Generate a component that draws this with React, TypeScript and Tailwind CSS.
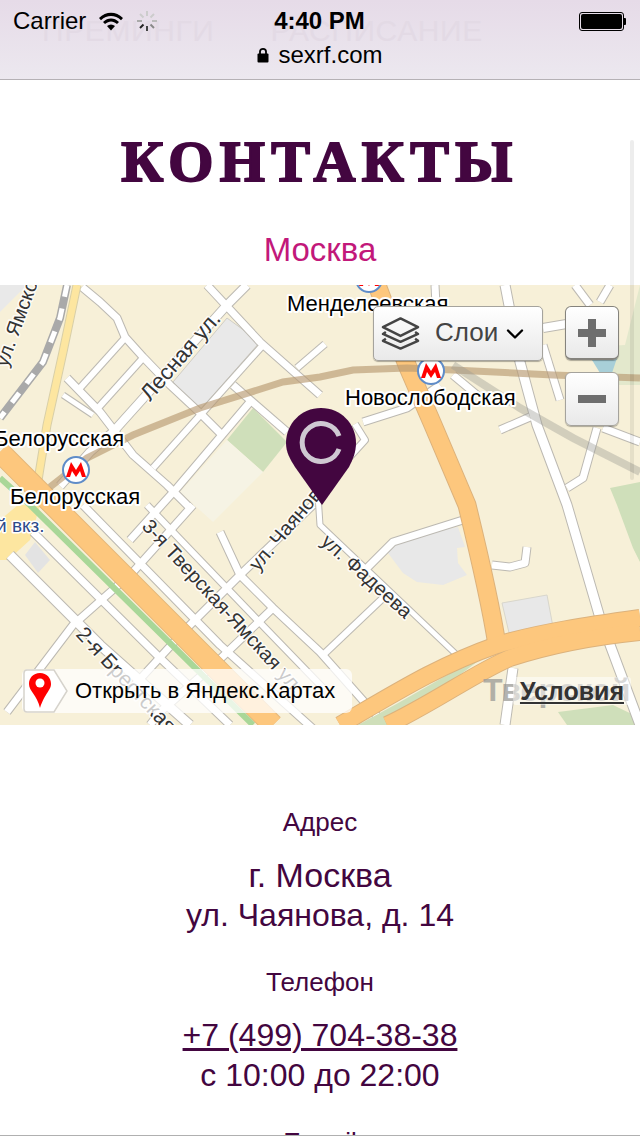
import React from 'react';
import { ChevronDown } from 'lucide-react';

type Road = { d: string; w: number };

// thin city streets, page coordinates (the svg viewBox starts at y=285)
const STREETS: Road[] = [
  { d: 'M82 287L100 302L117 318L125 337L143 357L170 385L200 413L222 435', w: 7 },
  { d: 'M247 285L227 305L113 432L90 452L60 486', w: 8 },
  { d: 'M80 388L125 338', w: 6 },
  { d: 'M98 408L143 358', w: 6 },
  { d: 'M67 378L100 412L133 455L167 485L190 508', w: 7 },
  { d: 'M63 395L93 415', w: 5 },
  { d: 'M207 285L260 342L320 395', w: 7 },
  { d: 'M233 385L287 432', w: 7 },
  { d: 'M263 345L153 468', w: 6 },
  { d: 'M250 402L177 488L130 540', w: 7 },
  { d: 'M297 368L325 344', w: 6 },
  { d: 'M0 460L30 490', w: 5 },
  { d: 'M10 555L100 645L190 725', w: 9 },
  { d: 'M33 532L157 655L230 725', w: 7 },
  { d: 'M83 505L220 645L320 735', w: 7 },
  { d: 'M147 505L267 630L325 690', w: 6 },
  { d: 'M220 532L240 575L273 608L320 652L367 705L385 725', w: 7 },
  { d: 'M193 505L133 572L73 625L7 712', w: 7 },
  { d: 'M240 575L187 628L130 690', w: 7 },
  { d: 'M273 608L217 662L160 712L150 725', w: 7 },
  { d: 'M313 505L240 575', w: 7 },
  { d: 'M318 495L320 525L460 658', w: 5 },
  { d: 'M323 655L383 598', w: 6 },
  { d: 'M367 568L393 542L463 520', w: 7 },
  { d: 'M492 565L510 567L525 563L527 547', w: 7 },
  { d: 'M363 422L407 408L440 385', w: 7 },
  { d: 'M355 424L365 440L345 462', w: 6 },
  { d: 'M453 375L477 395', w: 7 },
  { d: 'M500 430L530 417', w: 7 },
  { d: 'M543 328L590 320', w: 8 },
  { d: 'M543 345L560 400', w: 7 },
  { d: 'M505 285L520 362L537 425L567 505L600 618L640 725', w: 9 },
  { d: 'M597 428L583 478L567 488', w: 7 },
  { d: 'M603 428L640 442', w: 7 },
  { d: 'M435 285L436 305', w: 7 },
  { d: 'M575 285L590 305', w: 7 },
  { d: 'M610 285L600 302', w: 7 },
  { d: 'M505 725L513 668', w: 9 },
];

const STREET_LABELS = [
  { text: 'Лесная ул.', x: 150, y: 402, r: -49, size: 22 },
  { text: 'ул. Ямско', x: 7, y: 368, r: -70, size: 20 },
  { text: '3-я Тверская-Ямская ул.', x: 141, y: 527, r: 47.5, size: 20 },
  { text: '2-я Брестская', x: 75, y: 635, r: 47, size: 21 },
  { text: 'ул. Чаянова', x: 258, y: 572, r: -50, size: 20 },
  { text: 'ул. Фадеева', x: 320, y: 543, r: 42, size: 20 },
];

const METRO_LABELS = [
  { text: 'Менделеевская', x: 287, y: 311 },
  { text: 'Новослободская', x: 345, y: 405 },
  { text: 'Белорусская', x: -6, y: 446 },
  { text: 'Белорусская', x: 10, y: 504 },
];

const HIGHWAY_NS = 'M377 285L407 365L433 425L467 505C478 550 490 600 497 645';
const HIGHWAY_EW_1 = 'M340 725C400 690 440 665 497 645C540 632 590 625 640 618';
const HIGHWAY_EW_2 = 'M387 725C430 705 480 670 510 658C550 645 600 636 640 632';

const MetroMark: React.FC<{ x: number; y: number }> = ({ x, y }) => (
  <g transform={`translate(${x} ${y})`}>
    <circle r="13" fill="#fff" stroke="#5f8cc8" strokeWidth="2" />
    <path d="M-10 7L-5 -8L0 0L5 -8L10 7L6 7L4 1L0 7L-4 1L-6 7Z" fill="#f00" />
  </g>
);

const MapDrawing: React.FC = () => (
  <svg viewBox="0 285 640 440" className="block w-full h-[440px] bg-[#f7f0d8]">
    {/* blocks and parks */}
    <path d="M0 285H27L0 312Z" fill="#e9e9e9" />
    <path d="M173 382L227 318L260 342L200 410Z" fill="#e9e9e9" stroke="#cfcdc6" />
    <path d="M253 408L287 442L263 472L227 440Z" fill="#cfdfba" />
    <path d="M227 440L263 472L213 522L180 492Z" fill="#f6f3e4" />
    <path d="M25 555L35 542L50 560L38 573Z" fill="#e3e3e3" />
    <path d="M388 553L395 538L458 527L465 547L457 548L458 563L467 575L443 585L417 582L403 573Z" fill="#e8e8e8" />
    <path d="M502 603L547 595L553 627L510 637Z" fill="#e8e8e8" stroke="#d8d6cc" />
    <path d="M610 488L640 482V562L633 548L617 505Z" fill="#cfdfba" />
    <path d="M558 712L613 705L640 718V725H567Z" fill="#cfdfba" />
    <path d="M590 358L606 346L625 345L640 285V385H615Z" fill="#d6e2c4" opacity="0.6" />
    <path d="M592 360L617 358L612 373H600Z" fill="#a8cfd8" />
    <path d="M0 520L18 505H40L30 540L8 560H0Z" fill="#fde6a0" />

    {/* streets: casing first, then fill */}
    {STREETS.map((r, i) => (
      <path key={`c${i}`} d={r.d} fill="none" stroke="#bcb9b2" strokeWidth={r.w + 2} strokeLinejoin="round" />
    ))}
    {STREETS.map((r, i) => (
      <path key={`f${i}`} d={r.d} fill="none" stroke="#fff" strokeWidth={r.w} strokeLinejoin="round" />
    ))}

    {/* railway */}
    <path d="M67 285L60 318L43 362L0 418" fill="none" stroke="#a9a9a9" strokeWidth="8" />
    <path d="M67 285L60 318L43 362L0 418" fill="none" stroke="#fff" strokeWidth="5" strokeDasharray="12 12" />

    {/* highways */}
    <path d="M77 285L63 352L47 425L40 468L34 505" fill="none" stroke="#d8cfa8" strokeWidth="9" />
    <path d="M77 285L63 352L47 425L40 468L34 505" fill="none" stroke="#fde6a0" strokeWidth="7" />
    <path d="M0 478L30 505L253 725" fill="none" stroke="#a9d798" strokeWidth="6" />
    <path d="M0 452L53 505L273 725" fill="none" stroke="#e5b77a" strokeWidth="22" />
    <path d="M0 452L53 505L273 725" fill="none" stroke="#fdc77d" strokeWidth="20" />
    <path d="M358 725L400 702L470 662L490 652L440 690L395 725Z" fill="#cfdfba" />
    <path d={HIGHWAY_NS} fill="none" stroke="#dcb27c" strokeWidth="19" />
    <path d={HIGHWAY_EW_1} fill="none" stroke="#dcb27c" strokeWidth="18" />
    <path d={HIGHWAY_EW_2} fill="none" stroke="#dcb27c" strokeWidth="18" />
    <path d={HIGHWAY_NS} fill="none" stroke="#fdc77d" strokeWidth="17" />
    <path d={HIGHWAY_EW_1} fill="none" stroke="#fdc77d" strokeWidth="16" />
    <path d={HIGHWAY_EW_2} fill="none" stroke="#fdc77d" strokeWidth="16" />

    {/* metro and rail lines, see-through over the streets */}
    <path d="M50 487L87 458L133 435L200 408L283 382L320 377L353 370L407 368L453 370L553 375L640 378" fill="none" stroke="#b99a72" strokeOpacity="0.65" strokeWidth="7" />
    <path d="M453 365L520 408L573 438L640 472" fill="none" stroke="#9c9c94" strokeOpacity="0.4" strokeWidth="8" />

    <MetroMark x={369} y={279} />
    <MetroMark x={431} y={371} />
    <MetroMark x={76} y={470} />

    {/* labels */}
    <g fontFamily='"Liberation Sans", sans-serif' style={{ paintOrder: 'stroke' }}>
      {STREET_LABELS.map((l) => (
        <text key={l.text} transform={`translate(${l.x} ${l.y}) rotate(${l.r})`} fontSize={l.size} fill="#333" stroke="#fff" strokeOpacity="0.8" strokeWidth="3" strokeLinejoin="round">
          {l.text}
        </text>
      ))}
      {METRO_LABELS.map((l) => (
        <text key={l.y} x={l.x} y={l.y} fontSize="22" fill="#000" stroke="#fff" strokeWidth="4" strokeLinejoin="round">
          {l.text}
        </text>
      ))}
      <text x="-4" y="532" fontSize="19" fill="#2e4a8a" stroke="#fff" strokeWidth="3" strokeLinejoin="round">й вкз.</text>
      <text x="483" y="701" fontSize="32" fontWeight="700" fill="#9a9a96" opacity="0.75">Тверской</text>
    </g>

    {/* map pin */}
    <path d="M321 408C341 408 356 424 356 443C356 452 353 459 349 467L322 505L295 467C290 459 286 452 286 443C286 424 301 408 321 408Z" fill="#430640" />
    <path d="M339 436A19 19 0 1 0 339 449" fill="none" stroke="#cfc8d2" strokeWidth="5" />
  </svg>
);

const ContactBlock: React.FC<{ label: string; children: React.ReactNode }> = ({ label, children }) => (
  <div className="flex flex-col items-center">
    <div className="text-[26px] leading-[30px]">{label}</div>
    <div className="mt-[18px] text-[32px] leading-[40px]">{children}</div>
  </div>
);

export default function App() {
  return (
    <div className="relative h-[1136px] overflow-hidden bg-white font-['Liberation_Sans',sans-serif] text-[#430640]">
      {/* iOS status bar + address */}
      <header className="relative h-[80px] bg-gradient-to-b from-[#e6dbe8] to-[#ece8ef] border-b border-[#b5b1b5] text-black">
        <div className="absolute left-[42px] top-[14px] text-[30px] leading-[34px] tracking-[0.02em] whitespace-nowrap text-[#e3dae5]">
          ПРЕМИНГИ
          <span className="ml-[56px]">РАСПИСАНИЕ</span>
        </div>
        <div className="relative flex items-center h-[42px] px-[13px]">
          <div className="flex flex-1 items-center">
            <span className="text-[24px] leading-[42px]">Carrier</span>
            <svg viewBox="0 0 26 20" className="ml-[12px] w-[26px] h-[20px]">
              <path d="M1 7C8 0 18 0 25 7L23 9.2C17 3.6 9 3.6 3 9.2Z" />
              <path d="M5 11C10 6.4 16 6.4 21 11L19 13C15 9.6 11 9.6 7 13Z" />
              <path d="M9 15C11.5 13 14.5 13 17 15L13 19.5Z" />
            </svg>
            <svg viewBox="0 0 24 24" className="ml-[11px] w-[24px] h-[24px]" stroke="#8a8a8a" strokeWidth="2">
              <path d="M12 2V7" stroke="#ccc" /><path d="M19 5L15.500 8.500" stroke="#ccc" /><path d="M22 12H17" stroke="#bbb" />
              <path d="M19 19L15.500 15.500" stroke="#888" /><path d="M12 22V17" stroke="#444" /><path d="M5 19L8.500 15.500" stroke="#222" />
              <path d="M2 12H7" stroke="#aaa" /><path d="M5 5L8.500 8.500" stroke="#ccc" />
            </svg>
          </div>
          <span className="text-[24px] leading-[42px] font-semibold">4:40 PM</span>
          <div className="flex flex-1 justify-end items-center pr-px">
            <div className="flex items-center">
              <div className="w-[45px] h-[19px] rounded-[3px] border border-black p-[1px]">
                <div className="w-full h-full rounded-[2px] bg-black" />
              </div>
              <div className="w-[2px] h-[7px] bg-black rounded-r-[1px]" />
            </div>
          </div>
        </div>
        <div className="relative flex items-center justify-center gap-[9px] h-[26px]">
          <svg viewBox="0 0 12 16" className="w-[12px] h-[16px]">
            <path d="M3 7V4.500C3 1 9 1 9 4.500V7" fill="none" stroke="#000" strokeWidth="1.800" />
            <rect x="0.500" y="6.500" width="11" height="9" rx="1" />
          </svg>
          <span className="text-[24px] leading-[26px]">sexrf.com</span>
        </div>
      </header>

      <main>
        <h1 className="mt-[52px] text-center font-['Liberation_Serif',serif] font-bold text-[58px] leading-[60px] tracking-[0.11em] [-webkit-text-stroke:2px_#430640]">
          КОНТАКТЫ
        </h1>
        <div className="mt-[38px] text-center text-[33px] leading-[40px] text-[#c2187a]">Москва</div>

        <div className="relative mt-[15px]">
          <MapDrawing />

          {/* map controls */}
          <button className="absolute left-[373px] top-[21px] flex items-center w-[170px] h-[55px] pl-[7px] rounded-[5px] border border-[#a5a39d] bg-gradient-to-b from-white to-[#e9e9e9] shadow-[0_1px_1px_rgba(0,0,0,0.3)] text-[#444]">
            <svg viewBox="0 0 40 34" className="w-[39px] h-[34px] mt-[-2px]" fill="none" stroke="#444" strokeWidth="2.500" strokeLinejoin="round">
              <path d="M20 2L38 11L20 20L2 11Z" />
              <path d="M5 16L2 18L20 26L38 18L35 16" />
              <path d="M5 23L2 25L20 33L38 25L35 23" />
            </svg>
            <span className="ml-[15px] mt-[-3px] text-[26px] leading-[30px]">Слои</span>
            <ChevronDown className="ml-[3px] w-[28px] h-[28px] text-black" strokeWidth={2} />
          </button>
          <button className="absolute left-[565px] top-[21px] flex items-center justify-center w-[54px] h-[54px] rounded-[6px] border border-[#85837d] border-b-2 bg-gradient-to-b from-white to-[#e9e9e9] shadow-[0_1px_1px_rgba(0,0,0,0.3)]">
            <svg viewBox="0 0 28 28" className="w-[28px] h-[28px]" fill="#6e6e6e">
              <path d="M10 0H18V10H28V18H18V28H10V18H0V10H10Z" />
            </svg>
          </button>
          <button className="absolute left-[565px] top-[87px] flex items-center justify-center w-[54px] h-[54px] rounded-[6px] border border-[#a5a39d] bg-gradient-to-b from-white to-[#e9e9e9] shadow-[0_1px_1px_rgba(0,0,0,0.3)]">
            <svg viewBox="0 0 28 8" className="w-[28px] h-[8px]" fill="#6e6e6e"><rect width="28" height="8" /></svg>
          </button>

          {/* open in Yandex Maps */}
          <div className="absolute left-[22px] top-[384px] flex items-center w-[330px] h-[44px] rounded-[6px] bg-white/75">
            <svg viewBox="0 0 46 46" className="w-[46px] h-[46px] shrink-0">
              <path d="M5 2H32L45 23L32 44H5Q2 44 2 41V5Q2 2 5 2Z" fill="#fff" stroke="#d6d3cc" strokeWidth="1.500" />
              <path d="M18 5C25 5 29 10 29 16C29 22 23 25 18 40C15 27 7 23 7 16C7 10 11 5 18 5Z" fill="#f00" />
              <circle cx="18" cy="15" r="4.500" fill="#fff" />
            </svg>
            <span className="ml-[7px] text-[22px] leading-[24px] text-black whitespace-nowrap">Открыть в Яндекс.Картах</span>
          </div>
          <div className="absolute right-[9px] top-[392px] px-[7px] h-[28px] rounded-[3px] bg-white/50">
            <a className="block text-[25px] leading-[28px] font-bold underline text-[#333]">Условия</a>
          </div>
        </div>

        <section className="mt-[82px] flex flex-col items-center gap-[32px] text-center">
          <ContactBlock label="Адрес">
            <div className="text-[34px]">г. Москва</div>
            <div>ул. Чаянова, д. 14</div>
          </ContactBlock>
          <ContactBlock label="Телефон">
            <a className="block underline">+7 (499) 704-38-38</a>
            <div>с 10:00 до 22:00</div>
          </ContactBlock>
          <div className="text-[26px] leading-[30px]">E-mail</div>
        </section>
      </main>

      {/* scroll indicator and bottom edge overlay the page */}
      <div className="absolute right-[6px] top-[140px] w-[4px] h-[340px] rounded-full bg-black/[0.07]" />
      <div className="absolute left-0 right-0 bottom-0 h-px bg-[#b0b0b0]" />
    </div>
  );
}
